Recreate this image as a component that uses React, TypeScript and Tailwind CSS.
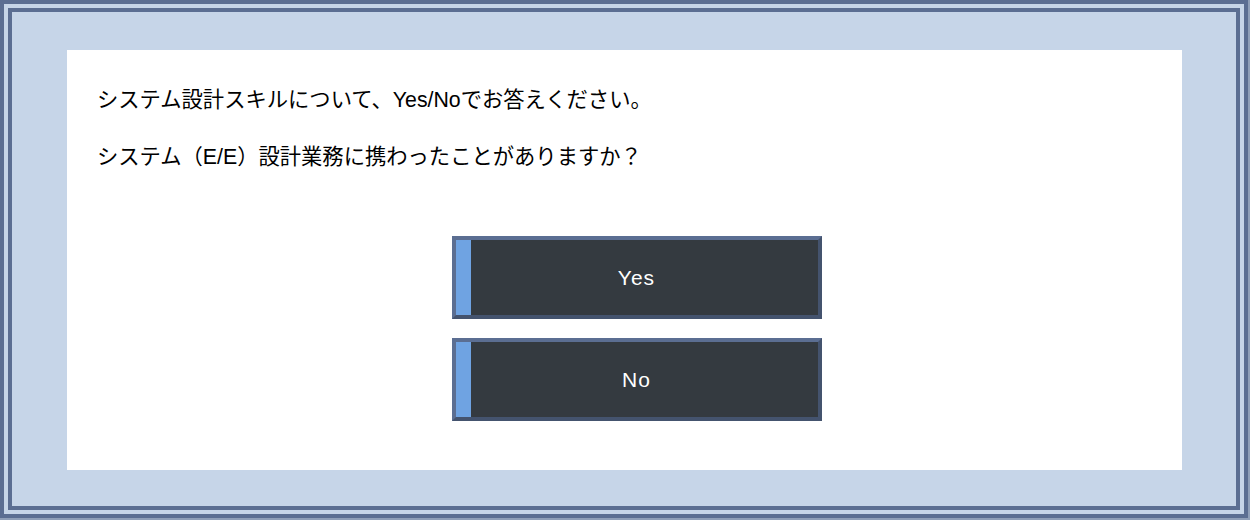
import React from "react";

function Choice({ label }: { label: string }) {
  return (
    <button
      type="button"
      className="flex h-[83px] w-[370px] items-stretch border-4 border-t-[#5b6e92] border-l-[#5b6e92] border-b-[#44536e] border-r-[#44536e] bg-[#343a40] p-0"
    >
      <span className="w-[15px] shrink-0 bg-[#6fa3e2]" />
      <span className="flex flex-1 items-center justify-center pr-[15px] text-[21px] tracking-[1px] text-white">
        {label}
      </span>
    </button>
  );
}

export default function App() {
  return (
    <div className="h-[520px] w-[1250px] bg-[#8f9fb8]">
      <div className="h-[518px] w-[1248px] border-[12px] border-double border-[#5b6e92] bg-[#c6d5e8] pl-[55px] pr-[54px] pt-[38px] pb-[36px] [font-family:'Liberation_Sans','Noto_Sans_CJK_JP',sans-serif]">
        <div className="h-full bg-white pl-[30px] pt-[36px]">
          <p className="text-[21.3px] leading-[28px] text-black">
            システム設計スキルについて、Yes/Noでお答えください。
          </p>
          <p className="mt-[29px] text-[21.3px] leading-[28px] text-black">
            システム（E/E）設計業務に携わったことがありますか？
          </p>
          <div className="mt-[65px] flex flex-col items-center gap-[19px] pr-[6px]">
            <Choice label="Yes" />
            <Choice label="No" />
          </div>
        </div>
      </div>
    </div>
  );
}
